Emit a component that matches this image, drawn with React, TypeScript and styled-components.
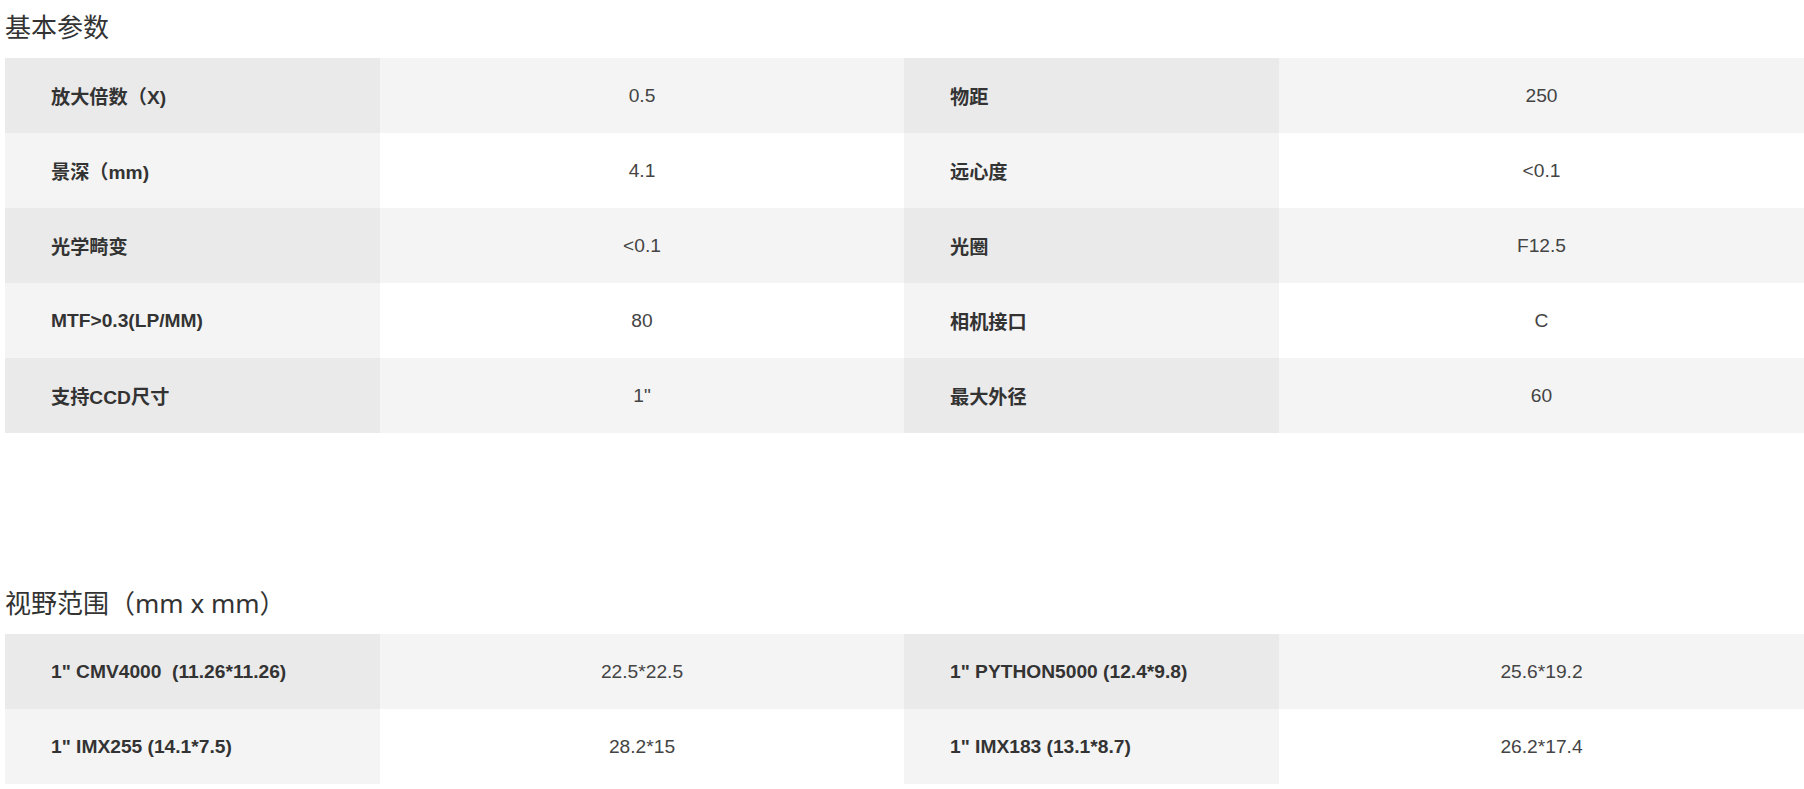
import React from "react"
import styled, { createGlobalStyle } from "styled-components"

type Pair = { label: string; value: string }

const GlobalStyle = createGlobalStyle`
	html, body {
		margin: 0;
		padding: 0;
		background: #fff;
	}
	body {
		font-family: "Liberation Sans", "Noto Sans CJK SC", sans-serif;
		color: #333;
	}
`

const Page = styled.div`
	padding-left: 5px;
`

const Section = styled.section<{ $gap?: number }>`
	margin-top: ${(p) => p.$gap ?? 0}px;
`

const Title = styled.h2`
	margin: 0;
	padding: 12px 0 16px;
	font-family: "Noto Sans", "Noto Sans CJK SC", sans-serif;
	font-size: 26px;
	font-weight: 400;
	line-height: 30px;
	color: #333;
	white-space: nowrap;
`

const Table = styled.div`
	display: flex;
	flex-direction: column;
`

const Row = styled.div<{ $shade: boolean }>`
	display: grid;
	grid-template-columns: 375fr 524fr 375fr 525fr;
	height: 75px;
	background: ${(p) => (p.$shade ? "#f4f4f4" : "#ffffff")};
`

const Label = styled.div<{ $shade: boolean }>`
	display: flex;
	align-items: center;
	padding-left: 46px;
	background: ${(p) => (p.$shade ? "#eaeaea" : "#f4f4f4")};
	font-size: 19.2px;
	font-weight: 700;
	color: #333;
	white-space: pre;
`

const Value = styled.div`
	display: flex;
	align-items: center;
	justify-content: center;
	font-size: 19.2px;
	color: #444;
`

const basics: Pair[][] = [
	[
		{ label: "放大倍数（X)", value: "0.5" },
		{ label: "物距", value: "250" },
	],
	[
		{ label: "景深（mm)", value: "4.1" },
		{ label: "远心度", value: "<0.1" },
	],
	[
		{ label: "光学畸变", value: "<0.1" },
		{ label: "光圈", value: "F12.5" },
	],
	[
		{ label: "MTF>0.3(LP/MM)", value: "80" },
		{ label: "相机接口", value: "C" },
	],
	[
		{ label: "支持CCD尺寸", value: '1"' },
		{ label: "最大外径", value: "60" },
	],
]

const fieldOfView: Pair[][] = [
	[
		{ label: '1" CMV4000  (11.26*11.26)', value: "22.5*22.5" },
		{ label: '1" PYTHON5000 (12.4*9.8)', value: "25.6*19.2" },
	],
	[
		{ label: '1" IMX255 (14.1*7.5)', value: "28.2*15" },
		{ label: '1" IMX183 (13.1*8.7)', value: "26.2*17.4" },
	],
]

const SpecTable = ({ rows }: { rows: Pair[][] }) => (
	<Table>
		{rows.map((pairs, i) => {
			const shade = i % 2 === 0
			return (
				<Row key={i} $shade={shade}>
					{pairs.map((p) => (
						<React.Fragment key={p.label}>
							<Label $shade={shade}>{p.label}</Label>
							<Value>{p.value}</Value>
						</React.Fragment>
					))}
				</Row>
			)
		})}
	</Table>
)

export default function App() {
	return (
		<>
			<GlobalStyle />
			<Page>
				<Section>
					<Title>基本参数</Title>
					<SpecTable rows={basics} />
				</Section>
				<Section $gap={143}>
					<Title>视野范围（mm x mm）</Title>
					<SpecTable rows={fieldOfView} />
				</Section>
			</Page>
		</>
	)
}
